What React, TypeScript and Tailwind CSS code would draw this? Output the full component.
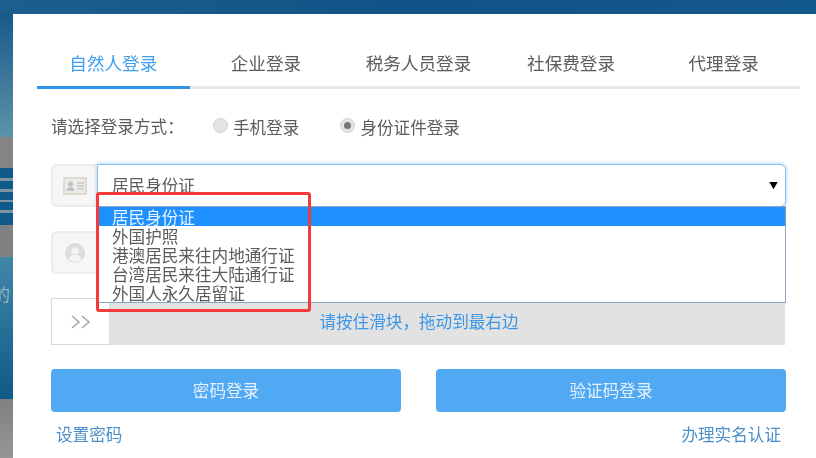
import React from "react";

const tabs = ["自然人登录", "企业登录", "税务人员登录", "社保费登录", "代理登录"];
const idTypes = [
  "居民身份证",
  "外国护照",
  "港澳居民来往内地通行证",
  "台湾居民来往大陆通行证",
  "外国人永久居留证",
];

const Radio = ({ label, checked }: { label: string; checked?: boolean }) => (
  <div className="flex items-center gap-[5px]">
    <span className="-mt-[3px] flex h-[15px] w-[15px] items-center justify-center rounded-full border border-[#cfcfcf] bg-[#e4e4e4]">
      {checked && <span className="h-[7px] w-[7px] rounded-full bg-[#777777]" />}
    </span>
    <span className="pt-[1px]">{label}</span>
  </div>
);

const Addon = ({ children }: { children: React.ReactNode }) => (
  <div className="flex h-[43px] w-[46px] items-center justify-center rounded-l-[6px] border-2 border-r-0 border-[#ececec] bg-[#f6f6f6]">
    {children}
  </div>
);

const App: React.FC = () => {
  return (
    <div className="flex h-[458px] w-[816px] flex-col overflow-hidden bg-white font-['Noto_Sans_CJK_SC','Liberation_Sans',sans-serif] text-[16.6px] text-[#5c5c5c]">
      <div className="h-[14px] shrink-0 bg-gradient-to-r from-[#1c5f8e] via-[#125387] to-[#14598c]" />
      <div className="flex min-h-0 flex-1">
        {/* background picture seen left of the card */}
        <div className="relative flex w-[13px] shrink-0 flex-col overflow-hidden">
          <div className="h-[123px] bg-gradient-to-b from-[#165a8a] to-[#5c93a8]" />
          <div className="h-[31px] bg-[#838485]" />
          <div className="h-[10px] bg-[#0f5a88]" />
          <div className="h-[3px] bg-[#7f929f]" />
          <div className="h-[8px] bg-[#0f5a88]" />
          <div className="h-[3px] bg-[#7f929f]" />
          <div className="h-[8px] bg-[#0f5a88]" />
          <div className="h-[2px] bg-[#7f929f]" />
          <div className="h-[8px] bg-[#0f5a88]" />
          <div className="h-[3px] bg-[#7f929f]" />
          <div className="h-[12px] bg-[#0f5a88]" />
          <div className="h-[32px] bg-[#808183]" />
          <div className="h-[142px] bg-gradient-to-b from-[#3f86a8] to-[#0f5a88]" />
          <div className="flex-1 bg-gradient-to-b from-[#808080] to-[#969696]" />
          <span className="absolute left-[-7px] top-[271px] text-[17px] leading-[17px] text-[#8fb3c6]">的</span>
        </div>

        <div className="flex flex-1 flex-col blur-[0.4px]">
          <div className="ml-[24px] mr-[16px] mt-[29px] flex h-[46px] border-b-[3px] border-[#e8e8e8]">
            {tabs.map((tab, i) => (
              <div
                key={tab}
                className={
                  i === 0
                    ? "-mb-[3px] flex flex-1 items-start justify-center border-b-[3px] border-[#2f93ea] pt-[8px] text-[17.6px] leading-[24px] text-[#3f9fef]"
                    : "flex flex-1 items-start justify-center pt-[8px] text-[17.6px] leading-[24px] text-[#5c5c5c]"
                }
              >
                {tab}
              </div>
            ))}
          </div>

          <div className="ml-[38px] mr-[30px] flex flex-col">
            <div className="mt-[25px] flex h-[26px] items-center">
              <span className="-mt-[2px] w-[162px]">请选择登录方式：</span>
              <div className="flex gap-[41px]">
                <Radio label="手机登录" />
                <Radio label="身份证件登录" checked />
              </div>
            </div>

            <div className="relative z-10 mt-[24px] flex">
              <Addon>
                <svg width="24" height="18" viewBox="0 0 24 18">
                  <rect x="1" y="1" width="22" height="16" fill="#ececec" stroke="#d8d4c8" strokeWidth="1.5" />
                  <circle cx="7.5" cy="7" r="2.6" fill="#c2c2c2" />
                  <path d="M3.5 14c0-3 1.800-4 4-4s4 1 4 4z" fill="#c2c2c2" />
                  <path d="M14 6h7M14 9h7M14 12h7" stroke="#c8c8c8" strokeWidth="1.3" />
                </svg>
              </Addon>
              <div className="relative flex h-[43px] flex-1 items-center justify-between rounded-r-[6px] border border-[#8cc3f0] bg-white pl-[14px] pr-[7px] shadow-[0_0_4px_#9ccbf2]">
                <span>居民身份证</span>
                <span className="text-[9px] text-black">▼</span>
                <div className="absolute left-[-1px] right-[-1px] top-[41px] border border-[#8fa3bd] bg-white">
                  {idTypes.map((t, i) => (
                    <div key={t} className={i === 0 ? "h-[19px] bg-[#1e90ff] pl-[14px] leading-[21px] text-[#e6f2ff]" : "h-[19px] pl-[14px] leading-[21px]"}>
                      {t}
                    </div>
                  ))}
                </div>
              </div>
            </div>

            <div className="mt-[24px] flex h-[43px]">
              <Addon>
                <svg width="20" height="20" viewBox="0 0 20 20">
                  <circle cx="10" cy="10" r="9.200" fill="#dedede" stroke="#d4d0c8" />
                  <circle cx="10" cy="8" r="3.600" fill="#f4f4f4" />
                  <path d="M3.800 16.500c.6-3.600 3-5 6.200-5s5.600 1.400 6.200 5a9 9 0 0 1-12.400 0z" fill="#f4f4f4" />
                </svg>
              </Addon>
            </div>

            <div className="mt-[24px] flex h-[47px] w-[734px] bg-[#e2e2e2]">
              <div className="flex w-[59px] shrink-0 items-center justify-center border border-[#d9d9d9] bg-white">
                <svg width="20" height="14" viewBox="0 0 20 14" fill="none" stroke="#a8a8a8" strokeWidth="1.6">
                  <path d="M1 1l7 6-7 6M11 1l7 6-7 6" />
                </svg>
              </div>
              <div className="flex flex-1 items-center justify-center pb-[1px] pr-[57px] text-[#3c97e6]">请按住滑块，拖动到最右边</div>
            </div>

            <div className="mt-[24px] flex justify-between">
              <button className="h-[43px] w-[350px] rounded-[4px] bg-[#52a9f3] text-[#e4f1fd]">密码登录</button>
              <button className="h-[43px] w-[350px] rounded-[4px] bg-[#52a9f3] text-[#e4f1fd]">验证码登录</button>
            </div>

            <div className="mt-[10px] flex justify-between pl-[5px] pr-[5px] leading-[24px] text-[#4b8fcb]">
              <span>设置密码</span>
              <span>办理实名认证</span>
            </div>
          </div>
        </div>
      </div>

      {/* annotation drawn over the screenshot */}
      <div className="absolute left-[96px] top-[192px] z-20 h-[120px] w-[215px] rounded-[3px] border-[3px] border-[#f23c3c]" />
    </div>
  );
};

export default App;
